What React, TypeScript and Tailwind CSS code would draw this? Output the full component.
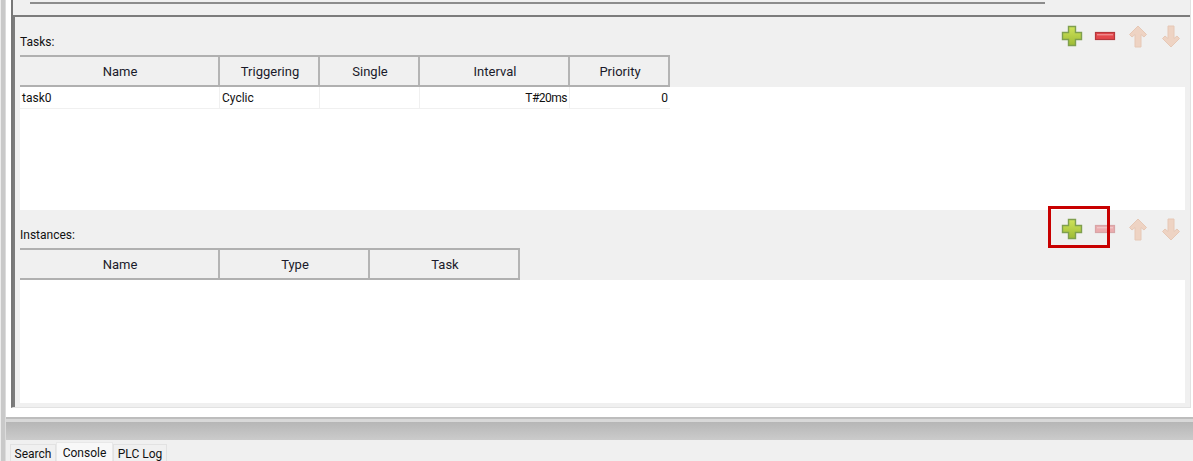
const font = { fontFamily: 'Roboto, "Noto Sans", sans-serif' }

const PlusIcon = () => (
  <svg width="22" height="22" viewBox="0 0 22 22">
    <defs>
      <linearGradient id="plusFill" x1="0" y1="0" x2="0" y2="1">
        <stop offset="0" stopColor="#cfe35a" />
        <stop offset="1" stopColor="#9dbb35" />
      </linearGradient>
    </defs>
    <path d="M7.5 1.5h7v6h6v7h-6v6h-7v-6h-6v-7h6z" fill="url(#plusFill)" stroke="#7f9f4f" strokeWidth="1.4" />
  </svg>
)

const MinusIcon = ({ faded }: { faded?: boolean }) => (
  <svg width="22" height="22" viewBox="0 0 22 22" className={faded ? 'opacity-40' : ''}>
    <rect x="1.5" y="7.5" width="19" height="7" fill="#e4484c" stroke="#b5383c" strokeWidth="1.2" />
    <rect x="3" y="9" width="16" height="1.4" fill="#ee8a8c" />
  </svg>
)

const ArrowIcon = ({ down }: { down?: boolean }) => (
  <svg width="22" height="23" viewBox="0 0 22 23" className={down ? 'rotate-180' : ''}>
    <path
      d="M11 1 L19.5 9.5 L17 12 L14 9.5 V22 H8 V9.5 L5 12 L2.5 9.5 Z"
      fill="#eed3c3"
      stroke="#e6c8b6"
      strokeWidth="1"
      strokeLinejoin="round"
    />
  </svg>
)

const Toolbar = ({ minusFaded }: { minusFaded?: boolean }) => (
  <div className="flex items-start gap-[11px] pt-[8px] pr-[3px]">
    <PlusIcon />
    <MinusIcon faded={minusFaded} />
    <ArrowIcon />
    <ArrowIcon down />
  </div>
)

type Column = { name: string; width: string }

const HeaderCells = ({ columns }: { columns: Column[] }) => (
  <div className="flex h-[32px] border-y-2 border-[#b0b0b0] bg-[#f0f0f0]">
    {columns.map((col) => (
      <div
        key={col.name}
        className={`${col.width} flex items-center justify-center border-r-2 border-[#b4b4b4] pl-[2px] pt-[1px] text-[13px] text-[#1a1a2a]`}
      >
        {col.name}
      </div>
    ))}
  </div>
)

const taskColumns: Column[] = [
  { name: 'Name', width: 'w-[200px]' },
  { name: 'Triggering', width: 'w-[100px]' },
  { name: 'Single', width: 'w-[100px]' },
  { name: 'Interval', width: 'w-[150px]' },
  { name: 'Priority', width: 'w-[100px]' },
]

const instanceColumns: Column[] = [
  { name: 'Name', width: 'w-[200px]' },
  { name: 'Type', width: 'w-[150px]' },
  { name: 'Task', width: 'w-[150px]' },
]

const TaskRow = () => (
  <div className="flex h-[22px] w-[650px] border-b border-[#f0f0f0] text-[12px] text-[#111]">
    <div className="w-[200px] border-r border-[#f0f0f0] px-[2px] leading-[22px]">task0</div>
    <div className="w-[100px] border-r border-[#f0f0f0] px-[2px] leading-[22px]">Cyclic</div>
    <div className="w-[100px] border-r border-[#f0f0f0]" />
    <div className="w-[150px] border-r border-[#f0f0f0] px-[2px] text-right leading-[22px] tracking-[-0.5px]">T#20ms</div>
    <div className="w-[100px] px-[2px] text-right leading-[22px]">0</div>
  </div>
)

const Section = ({
  label,
  columns,
  minusFaded,
  children,
}: {
  label: string
  columns: Column[]
  minusFaded?: boolean
  children?: React.ReactNode
}) => (
  <div>
    <div className="flex items-start justify-between">
      <div>
        <div className="flex h-[38px] items-end pb-[5px] text-[12px] leading-[16px] text-[#111]">{label}</div>
        <HeaderCells columns={columns} />
      </div>
      <Toolbar minusFaded={minusFaded} />
    </div>
    <div className="h-[123px] bg-white">{children}</div>
  </div>
)

const Tab = ({ label, active, width }: { label: string; active?: boolean; width: string }) => (
  <div
    className={
      active
        ? `${width} flex h-[19px] items-center justify-center border border-b-0 border-[#e8e8e8] bg-[#f8f8f8] pt-[2px] text-[12px] text-[#111]`
        : `${width} flex h-[17px] items-center justify-center border border-b-0 border-[#e2e2e2] bg-[#f0f0f0] pt-[1px] text-[12px] text-[#111]`
    }
  >
    {label}
  </div>
)

export default function App() {
  return (
    <div className="relative flex h-[461px] w-[1193px] overflow-hidden bg-[#f0f0f0]" style={font}>
      {/* left splitter strip */}
      <div className="w-px bg-[#ececec]" />
      <div className="w-[4px] bg-[#c9c9c9]" />
      <div className="w-px bg-[#dcdcdc]" />

      <div className="flex flex-1 flex-col">
        <div className="h-[417px] bg-white pl-[5px] pr-[2px] pb-[9px]">
          <div className="flex h-full flex-col border-b border-r border-l-2 border-b-[#e2e2e2] border-r-[#e2e2e2] border-l-[#777777] bg-[#f0f0f0]">
            <div className="h-[15px] pl-[17px] pt-[2px]">
              <div className="h-[2px] w-[1015px] bg-[#8c8c8c]" />
            </div>
            <div className="flex-1 border-t-2 border-l-2 border-[#7c7c7c] pl-[5px] pr-[5px]">
              <Section label="Tasks:" columns={taskColumns}>
                <TaskRow />
              </Section>
              <Section label="Instances:" columns={instanceColumns} minusFaded />
            </div>
          </div>
        </div>
        <div className="h-[2px] bg-[#bdbdbd]" />
        <div className="h-[3px] bg-[#d8d8d8]" />
        <div className="h-[18px] bg-linear-to-b from-[#b6b6b6] to-[#cbcbcb]" />
        <div className="flex flex-1 items-end pl-[4px]">
          <Tab label="Search" width="w-[46px]" />
          <Tab label="Console" width="w-[57px]" active />
          <Tab label="PLC Log" width="w-[54px]" />
        </div>
      </div>

      {/* annotation box */}
      <div className="absolute left-[1048px] top-[206px] h-[42px] w-[62px] border-[3px] border-[#c80000]" />
    </div>
  )
}
